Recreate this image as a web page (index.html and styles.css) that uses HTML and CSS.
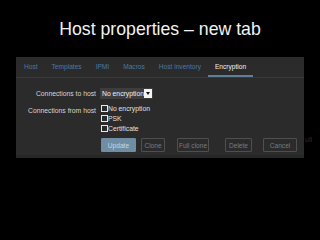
FILE: index.html
```html
<!DOCTYPE html>
<html lang="en">
<head>
  <meta charset="UTF-8">
  <title>Host properties – new tab</title>
  <link rel="stylesheet" href="styles.css">
</head>
<body>
<div class="slide">
  <h1 class="title">Host properties – new tab</h1>

  <div class="row-wrap">
    <div class="panel">
      <!-- tabs -->
      <div class="tabs">
        <span class="tab">Host</span>
        <span class="tab">Templates</span>
        <span class="tab">IPMI</span>
        <span class="tab">Macros</span>
        <span class="tab">Host inventory</span>
        <span class="tab active">Encryption</span>
      </div>

      <!-- form -->
      <div class="form">
        <div class="form-row">
          <div class="form-label">Connections to host</div>
          <div class="select">
            <span>No encryption</span>
            <span class="select-arrow"></span>
          </div>
        </div>
        <div class="form-row top">
          <div class="form-label from">Connections from host</div>
          <div class="checks">
            <label class="check"><span class="box"></span>No encryption</label>
            <label class="check"><span class="box"></span>PSK</label>
            <label class="check"><span class="box"></span>Certificate</label>
          </div>
        </div>
        <div class="buttons">
          <button class="btn primary">Update</button>
          <button class="btn clone">Clone</button>
          <button class="btn full">Full clone</button>
          <button class="btn delete">Delete</button>
          <button class="btn cancel">Cancel</button>
        </div>
      </div>
    </div>
    <span class="overflow">ull</span>
  </div>
</div>
</body>
</html>
```

FILE: styles.css
```css
body {
  margin: 0;
  padding: 0;
  background-color: #000;
  font-family: "Liberation Sans", Arial, sans-serif;
}
.slide {
  width: 320px;
  height: 240px;
  overflow: hidden;
}
.title {
  margin: 0;
  padding-top: 18px;
  height: 38px;
  box-sizing: border-box;
  font-size: 17.7px;
  line-height: 22px;
  font-weight: normal;
  color: #f2f2f2;
  text-align: center;
}
.row-wrap {
  display: flex;
  align-items: flex-end;
  margin-top: 19px;
}
.panel {
  margin-left: 16px;
  width: 288px;
  height: 101px;
  background-color: #2b2b2b;
  box-shadow: inset 0 -3px 0 #262626;
}
.overflow {
  font-size: 7px;
  color: #2e2e2e;
  margin-left: 1px;
  margin-bottom: 15px;
}
.tabs {
  display: flex;
  height: 21px;
  padding-left: 1px;
  border-bottom: 1px solid #383838;
  box-sizing: border-box;
}
.tab {
  padding: 0 7px;
  font-size: 6.6px;
  line-height: 20px;
  color: #4a78a2;
  white-space: nowrap;
}
.tab.active {
  color: #f0f0f0;
  box-shadow: inset 0 -2px 0 #5f7f98;
}
.form {
  display: flex;
  flex-direction: column;
  padding-top: 10px;
}
.form-row {
  display: flex;
  align-items: center;
  gap: 4px;
  margin-bottom: 5px;
}
.form-row.top {
  align-items: flex-start;
  margin-bottom: 5px;
}
.form-label {
  width: 80px;
  text-align: right;
  font-size: 6.8px;
  line-height: 10px;
  color: #d4d4d4;
  white-space: nowrap;
}
.form-label.from {
  padding-top: 2px;
}
.select {
  display: flex;
  align-items: center;
  height: 11px;
  width: 53px;
  box-sizing: border-box;
  padding-left: 2px;
  background-color: #3d3d3d;
  font-size: 6.8px;
  color: #f0f0f0;
  white-space: nowrap;
}
.select span:first-child {
  flex: 1;
}
.select-arrow {
  width: 8px;
  height: 9px;
  margin-right: 1px;
  background-color: #f4f4f4;
  position: relative;
}
.select-arrow::after {
  content: "";
  position: absolute;
  left: 2px;
  top: 3px;
  border-left: 2px solid transparent;
  border-right: 2px solid transparent;
  border-top: 3px solid #111;
}
.checks {
  display: flex;
  flex-direction: column;
  padding-left: 1px;
}
.check {
  display: flex;
  align-items: center;
  height: 9.7px;
  font-size: 6.8px;
  color: #e0e0e0;
  white-space: nowrap;
}
.box {
  width: 5px;
  height: 5px;
  border: 1px solid #e8e8e8;
}
.buttons {
  display: flex;
  padding-left: 85px;
}
.btn {
  height: 14px;
  padding: 0;
  font-family: "Liberation Sans", Arial, sans-serif;
  font-size: 6.6px;
  color: #7a7a7a;
  background-color: transparent;
  border: 1px solid #4f4f4f;
  border-radius: 1px;
  white-space: nowrap;
}
.btn.primary {
  width: 35px;
  background-color: #6f8ea3;
  border-color: #6f8ea3;
  color: #c6d6e0;
}
.btn.clone {
  width: 24px;
  margin-left: 5px;
}
.btn.full {
  width: 32px;
  margin-left: 12px;
}
.btn.delete {
  width: 27px;
  margin-left: 16px;
}
.btn.cancel {
  width: 34px;
  margin-left: 11px;
}
```
